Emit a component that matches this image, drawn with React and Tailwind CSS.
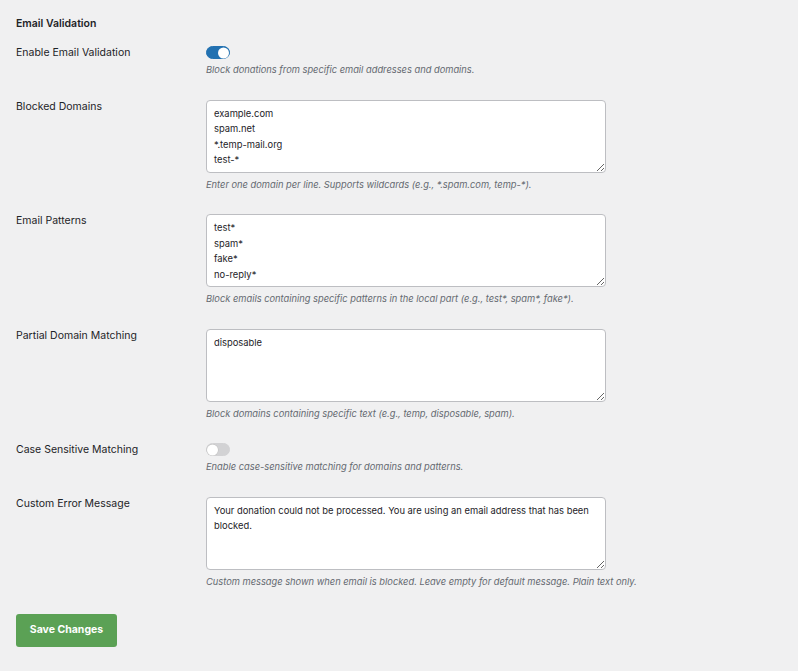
import React, { useState } from "react";

const font = { fontFamily: "Inter, 'Liberation Sans', sans-serif" };

const Toggle = ({ on, onChange }) => (
  <button
    type="button"
    onClick={() => onChange(!on)}
    className={`relative flex h-[13px] w-[24px] items-center rounded-full border ${
      on ? "border-[#2271b1] bg-[#2271b1]" : "border-[#d2d2d4] bg-[#d2d2d4]"
    }`}
  >
    <span
      className={`absolute top-1/2 h-[11px] w-[11px] -translate-y-1/2 rounded-full bg-white ${
        on ? "right-[0px]" : "left-[0px] shadow-[0_0_0_0.5px_#c0c0c0]"
      }`}
    />
  </button>
);

const Row = ({ label, children, desc, tight }) => (
  <div className="flex">
    <div className="w-[190px] shrink-0 text-[10.5px] leading-[14px] text-[#1d2327]">
      {label}
    </div>
    <div className="flex flex-col">
      {children}
      <p
        className={`${tight ? "mt-[5px]" : "mt-[6px]"} text-[9.3px] italic leading-[12px] text-[#646970]`}
      >
        {desc}
      </p>
    </div>
  </div>
);

const Area = ({ value }) => (
  <textarea
    defaultValue={value}
    className="block h-[73px] w-[400px] resize-y overflow-hidden rounded-[4px] border border-[#bdbec2] bg-white px-[7px] py-[5px] text-[9.4px] leading-[15.5px] text-[#1d2327] outline-none"
    style={font}
  />
);

export default function App() {
  const [enabled, setEnabled] = useState(true);
  const [caseSensitive, setCaseSensitive] = useState(false);

  return (
    <div className="min-h-[671px] bg-[#f0f0f1] px-[16px] pt-[17px]" style={font}>
      <h2 className="text-[10.5px] font-semibold leading-[14px] text-[#1d2327]">
        Email Validation
      </h2>

      <div className="mt-[15px] flex flex-col gap-[23.5px]">
        <Row
          tight
          label="Enable Email Validation"
          desc="Block donations from specific email addresses and domains."
        >
          <Toggle on={enabled} onChange={setEnabled} />
        </Row>

        <Row
          label="Blocked Domains"
          desc="Enter one domain per line. Supports wildcards (e.g., *.spam.com, temp-*)."
        >
          <Area value={"example.com\nspam.net\n*.temp-mail.org\ntest-*"} />
        </Row>

        <Row
          label="Email Patterns"
          desc="Block emails containing specific patterns in the local part (e.g., test*, spam*, fake*)."
        >
          <Area value={"test*\nspam*\nfake*\nno-reply*\nnoreply*"} />
        </Row>

        <Row
          label="Partial Domain Matching"
          desc="Block domains containing specific text (e.g., temp, disposable, spam)."
        >
          <Area value={"disposable"} />
        </Row>

        <Row
          tight
          label="Case Sensitive Matching"
          desc="Enable case-sensitive matching for domains and patterns."
        >
          <Toggle on={caseSensitive} onChange={setCaseSensitive} />
        </Row>

        <Row
          label="Custom Error Message"
          desc="Custom message shown when email is blocked. Leave empty for default message. Plain text only."
        >
          <Area value="Your donation could not be processed. You are using an email address that has been blocked." />
        </Row>
      </div>

      <button
        type="button"
        className="mt-[26px] h-[33px] w-[101px] rounded-[3px] bg-[#5ba155] text-[10.5px] font-bold text-white"
      >
        Save Changes
      </button>
    </div>
  );
}
